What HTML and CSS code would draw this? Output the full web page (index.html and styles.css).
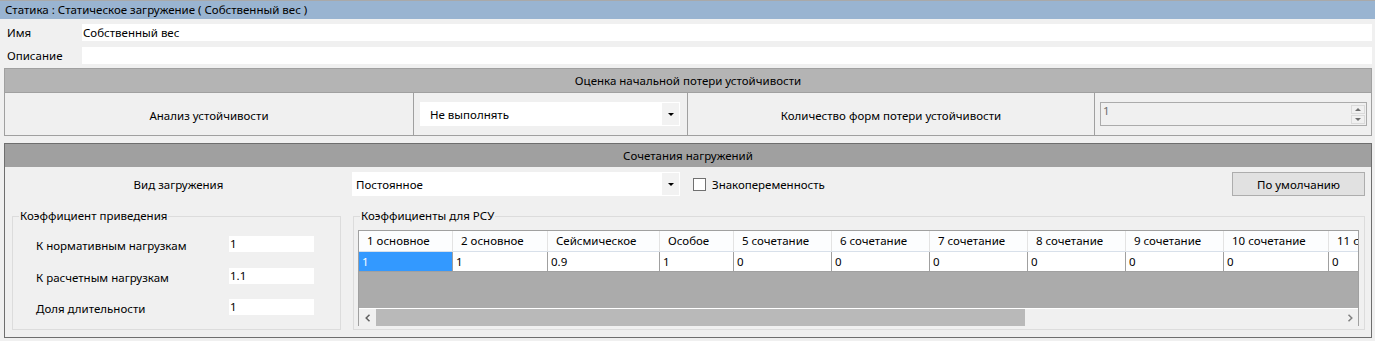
FILE: index.html
```html
<!DOCTYPE html>
<html lang="ru">
<head>
<meta charset="utf-8">
<title>Статика</title>
<link rel="stylesheet" href="styles.css">
</head>
<body>
<div class="window">
  <div class="titlebar">Статика : Статическое загружение ( Собственный вес )</div>

  <div class="props">
    <div class="prop-row">
      <span class="prop-label">Имя</span>
      <div class="prop-input">Собственный вес</div>
    </div>
    <div class="prop-row">
      <span class="prop-label">Описание</span>
      <div class="prop-input"></div>
    </div>
  </div>

  <section class="panel panel-stab">
    <div class="panel-head head-light">Оценка начальной потери устойчивости</div>
    <div class="stab-row">
      <div class="cell cell-text">Анализ устойчивости</div>
      <div class="cell cell-combo">
        <div class="combo combo-stab">
          <span class="combo-text">Не выполнять</span>
          <span class="combo-btn"><span class="tri-down"></span></span>
        </div>
      </div>
      <div class="cell cell-text">Количество форм потери устойчивости</div>
      <div class="cell cell-spin">
        <div class="spin">
          <span class="spin-text">1</span>
          <span class="spin-btns">
            <span class="spin-btn"><span class="tri-up small"></span></span>
            <span class="spin-btn"><span class="tri-down small"></span></span>
          </span>
        </div>
      </div>
    </div>
  </section>

  <section class="panel panel-comb">
    <div class="panel-head head-dark">Сочетания нагружений</div>
    <div class="comb-controls">
      <div class="ctl-label">Вид загружения</div>
      <div class="combo combo-kind">
        <span class="combo-text">Постоянное</span>
        <span class="combo-btn"><span class="tri-down"></span></span>
      </div>
      <label class="check"><span class="check-box"></span>Знакопеременность</label>
      <div class="spacer"></div>
      <button class="btn">По умолчанию</button>
    </div>

    <div class="groups">
      <fieldset class="group group-coef">
        <legend>Коэффициент приведения</legend>
        <div class="coef-grid">
          <span class="coef-label">К нормативным нагрузкам</span>
          <span class="coef-input">1</span>
          <span class="coef-label">К расчетным нагрузкам</span>
          <span class="coef-input">1.1</span>
          <span class="coef-label">Доля длительности</span>
          <span class="coef-input">1</span>
        </div>
      </fieldset>

      <fieldset class="group group-rsu">
        <legend>Коэффициенты для РСУ</legend>
        <div class="table">
          <div class="table-grid">
            <div class="th">1 основное</div>
            <div class="th">2 основное</div>
            <div class="th">Сейсмическое</div>
            <div class="th">Особое</div>
            <div class="th">5 сочетание</div>
            <div class="th">6 сочетание</div>
            <div class="th">7 сочетание</div>
            <div class="th">8 сочетание</div>
            <div class="th">9 сочетание</div>
            <div class="th">10 сочетание</div>
            <div class="th">11 сочетание</div>
            <div class="td td-sel">1</div>
            <div class="td">1</div>
            <div class="td">0.9</div>
            <div class="td">1</div>
            <div class="td">0</div>
            <div class="td">0</div>
            <div class="td">0</div>
            <div class="td">0</div>
            <div class="td">0</div>
            <div class="td">0</div>
            <div class="td">0</div>
          </div>
          <div class="table-empty"></div>
          <div class="hscroll">
            <span class="sb-arrow">
              <svg width="6" height="8" viewBox="0 0 6 8"><path d="M4.5 0.8 L1.2 4 L4.5 7.2" fill="none" stroke="#606060" stroke-width="1.5"/></svg>
            </span>
            <span class="sb-track">
              <span class="sb-thumb"></span>
            </span>
            <span class="sb-arrow">
              <svg width="6" height="8" viewBox="0 0 6 8"><path d="M1.5 0.8 L4.8 4 L1.5 7.2" fill="none" stroke="#808080" stroke-width="1.5"/></svg>
            </span>
          </div>
        </div>
      </fieldset>
    </div>
  </section>
</div>
</body>
</html>
```

FILE: styles.css
```css
* { box-sizing: border-box; }

html, body {
  margin: 0;
  padding: 0;
  background: #f0f0f0;
}

body {
  font-family: "Noto Sans", "Liberation Sans", sans-serif;
  font-size: 11.5px;
  color: #000;
  width: 1375px;
  height: 341px;
  overflow: hidden;
}

.window {
  display: flex;
  flex-direction: column;
}

/* title */
.titlebar {
  height: 19px;
  border-top: 1px solid #a9a9a9;
  background: #99b4d1;
  padding-left: 5px;
  line-height: 18px;
  white-space: nowrap;
}

/* name / description */
.props {
  display: flex;
  flex-direction: column;
  gap: 6px;
  padding: 5px 3px 0 7px;
}

.prop-row {
  display: grid;
  grid-template-columns: 75px 1fr;
  align-items: center;
}

.prop-input {
  height: 17px;
  background: #fff;
  line-height: 17px;
  padding-left: 1px;
}

/* panels */
.panel {
  margin: 4px 3px 0 4px;
  border: 1px solid #a0a0a0;
}

.panel-comb {
  margin-top: 7px;
  border-color: #6e6e6e;
  height: 195px;
}

.panel-head {
  text-align: center;
  white-space: nowrap;
}

.head-light {
  height: 24px;
  line-height: 23px;
  background: #b4b4b4;
  border-bottom: 1px solid #a0a0a0;
}

.head-dark {
  height: 23px;
  line-height: 23px;
  background: #a0a0a0;
}

/* stability row */
.stab-row {
  display: grid;
  grid-template-columns: 408px 274px 407px 1fr;
  height: 42px;
}

.cell {
  display: flex;
  align-items: center;
}

.cell + .cell {
  border-left: 1px solid #a0a0a0;
}

.cell-text {
  justify-content: center;
  padding-top: 2px;
}

.cell-combo {
  padding-left: 6px;
}

.cell-spin {
  padding-left: 5px;
}

.combo {
  display: flex;
  align-items: center;
  height: 24px;
  background: #fff;
}

.combo-text {
  flex: 1;
  padding-left: 10px;
  white-space: nowrap;
}

.combo-btn {
  width: 17px;
  height: 22px;
  margin-right: 1px;
  background: #f2f2f2;
  display: flex;
  align-items: center;
  justify-content: center;
}

.combo-stab {
  width: 260px;
}

.tri-down {
  width: 0;
  height: 0;
  border-left: 3px solid transparent;
  border-right: 3px solid transparent;
  border-top: 3px solid #000;
}

.tri-up {
  width: 0;
  height: 0;
  border-left: 3px solid transparent;
  border-right: 3px solid transparent;
  border-bottom: 3px solid #000;
}

.tri-down.small { border-top-color: #6d6d6d; }
.tri-up.small { border-bottom-color: #6d6d6d; }

.spin {
  width: 267px;
  height: 24px;
  border: 1px solid #ababab;
  display: flex;
  align-items: center;
  justify-content: space-between;
  padding: 0 1px 0 2px;
}

.spin-text {
  color: #6d6d6d;
  align-self: flex-start;
  line-height: 16px;
}

.spin-btns {
  display: flex;
  flex-direction: column;
  gap: 1px;
}

.spin-btn {
  width: 14px;
  height: 9px;
  border: 1px solid #dadada;
  background: #f0f0f0;
  display: flex;
  align-items: center;
  justify-content: center;
}

/* combinations controls */
.comb-controls {
  display: grid;
  grid-template-columns: 347px 328px auto 1fr 133px;
  align-items: center;
  margin-top: 5px;
  height: 24px;
  padding-right: 6px;
}

.ctl-label {
  text-align: center;
  padding-top: 1px;
}

.combo-kind .combo-text {
  padding-left: 4px;
}

.check {
  display: flex;
  align-items: center;
  gap: 6px;
  margin-left: 13px;
  padding-top: 1px;
}

.check-box {
  width: 13px;
  height: 13px;
  border: 1px solid #707070;
  background: #fff;
}

.btn {
  height: 24px;
  border: 1px solid #adadad;
  background: #e1e1e1;
  font-family: inherit;
  font-size: 11.5px;
  color: #000;
  padding: 0;
}

/* groups */
.groups {
  display: grid;
  grid-template-columns: 329px 1012px;
  column-gap: 12px;
  padding-left: 7px;
  margin-top: 12px;
}

.group {
  margin: 0;
  padding: 0;
  min-width: 0;
  border: 1px solid #dcdcdc;
  height: 122px;
}

.group legend {
  margin-left: 6px;
  padding: 0 1px;
  line-height: 16px;
}

.coef-grid {
  display: grid;
  grid-template-columns: 193px 85px;
  grid-auto-rows: 16px;
  row-gap: 15.5px;
  padding: 12px 0 0 23px;
}

.coef-label {
  line-height: 16px;
  position: relative;
  top: 2px;
  white-space: nowrap;
}

.coef-input {
  height: 16px;
  background: #fff;
  line-height: 15px;
  padding-left: 1px;
}

/* table */
.table {
  margin: 6px 5px 0 4px;
  border: 1px solid #a0a0a0;
  border-bottom: 0;
  overflow: hidden;
  height: 96px;
  display: flex;
  flex-direction: column;
}

.table-grid {
  display: grid;
  grid-template-columns: 94px 95px 112px 74px 98px 98px 98px 98px 98px 105px 98px;
  grid-template-rows: 21px 20px;
  width: max-content;
}

.th {
  background: #fcfdfe;
  border-right: 1px solid #e3e3e3;
  border-bottom: 1px solid #d8e0ea;
  padding-left: 8px;
  line-height: 20px;
  white-space: nowrap;
}

.td {
  background: #fff;
  border-right: 1px solid #a0a0a0;
  border-bottom: 1px solid #a0a0a0;
  padding-left: 3px;
  line-height: 19px;
  white-space: nowrap;
}

.td-sel {
  background: #3399ff;
  color: #fff;
}

.table-empty {
  flex: 1;
  background: #ababab;
  border-bottom: 1px solid #fff;
}

.hscroll {
  height: 17px;
  display: flex;
  background: #f0f0f0;
}

.sb-arrow {
  width: 17px;
  display: flex;
  align-items: center;
  justify-content: center;
}

.sb-track {
  flex: 1;
  display: flex;
  align-items: center;
}

.sb-thumb {
  width: 649px;
  height: 17px;
  background: #b9b9b9;
}
```
